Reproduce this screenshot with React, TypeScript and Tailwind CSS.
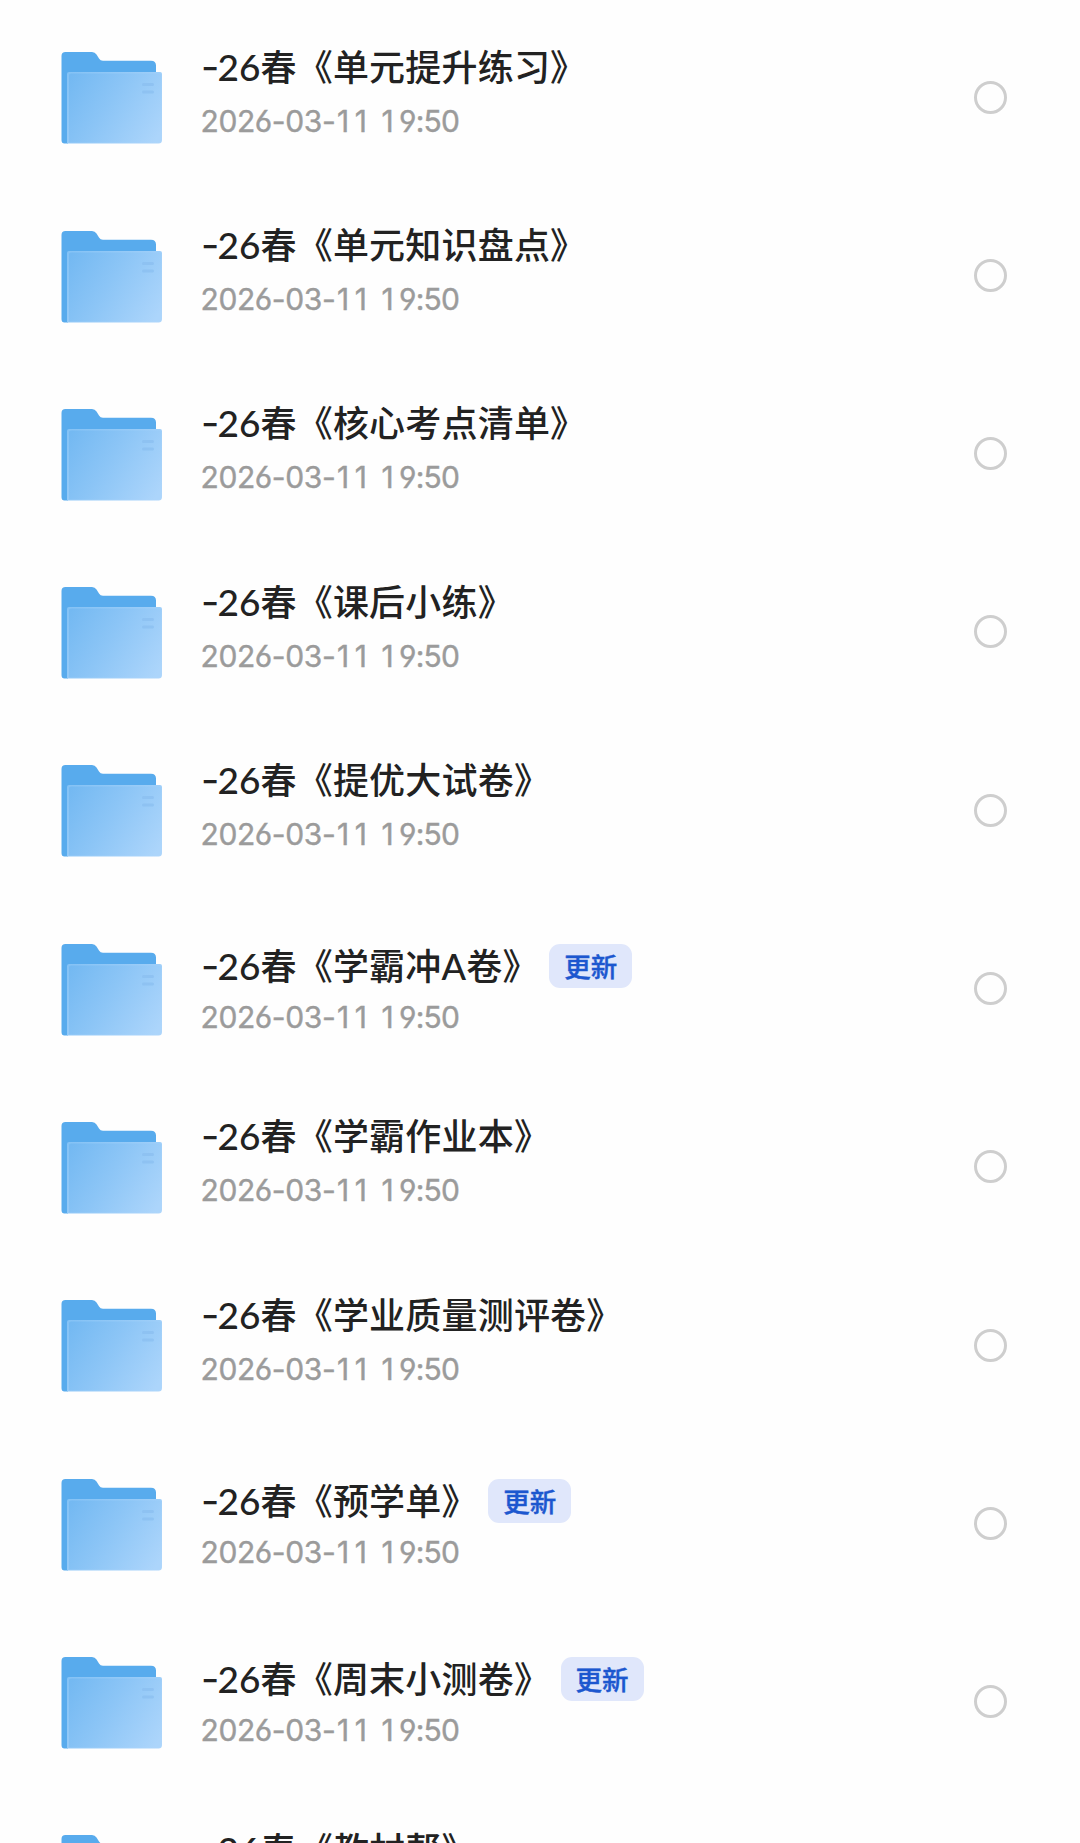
import React from "react";

type Entry = { title: string; updated?: boolean };

const entries: Entry[] = [
  { title: "春《单元提升练习》" },
  { title: "春《单元知识盘点》" },
  { title: "春《核心考点清单》" },
  { title: "春《课后小练》" },
  { title: "春《提优大试卷》" },
  { title: "春《学霸冲A卷》", updated: true },
  { title: "春《学霸作业本》" },
  { title: "春《学业质量测评卷》" },
  { title: "春《预学单》", updated: true },
  { title: "春《周末小测卷》", updated: true },
  { title: "春《教材帮》" },
];

function FolderIcon() {
  return (
    <svg className="mt-[43.3px] h-[94px] w-[102px] shrink-0" viewBox="0 0 102 94" fill="none">
      <defs>
        <linearGradient id="front" x1="8" y1="28" x2="98" y2="84" gradientUnits="userSpaceOnUse">
          <stop stopColor="#74b9f2" />
          <stop offset="0.45" stopColor="#8cc5f6" />
          <stop offset="1" stopColor="#acd5fb" />
        </linearGradient>
        <linearGradient id="edge" x1="6" y1="22" x2="100" y2="92" gradientUnits="userSpaceOnUse">
          <stop stopColor="#84c2f5" />
          <stop offset="1" stopColor="#afd6fb" />
        </linearGradient>
      </defs>
      <path d="M0.5 5Q0.5 1 4.500 1H31Q34 1 35.500 3.500L38 7.500Q39.300 9.700 42 9.700H90Q95 9.700 95 14.500V80H7V92.500H3.500Q0.500 92.500 0.500 89Z" fill="#58abed" />
      <path d="M6 23Q6 21 8 21H99Q101 21 101 23V89Q101 92.500 97.500 92.500H6Z" fill="url(#edge)" />
      <path d="M8 24Q8 22.500 10 22.500H98Q100 22.500 100 24V89Q100 91.500 97 91.500H8Z" fill="url(#front)" />
      <path d="M82.500 33.500H91.500M82.500 41H91.500" stroke="#8bbff0" strokeOpacity="0.75" strokeWidth="3" strokeLinecap="round" />
    </svg>
  );
}

function Timestamp() {
  return (
    <div className="flex h-[36px] font-[Inter] text-[30px] leading-[36px] whitespace-pre text-[#9b9b9b] [-webkit-text-stroke:0.4px_#9b9b9b] [font-feature-settings:'cv03','cv04']">
      <span className="w-[136.5px] tracking-[-0.4px]">2026-03-</span>
      <span className="w-[44.5px] tracking-[5.5px]">11 </span>
      <span className="w-[17.5px]">1</span>
      <span className="tracking-[-0.8px]">9:50</span>
    </div>
  );
}

function Row({ title, updated }: Entry) {
  return (
    <li className="flex h-[178.3px] shrink-0 items-start pr-[73px] pl-[60.5px]">
      <FolderIcon />
      <div className={updated ? "ml-[38px] flex-1 pt-[44.2px]" : "ml-[38px] flex-1 pt-[36.7px]"}>
        <div className="flex h-[44px] items-center text-[36px] leading-[44px] font-medium whitespace-nowrap text-[#222222]">
          <span className="flex w-[60px]">
            <span className="inline-block w-[18px] origin-left scale-x-110 font-[Inter]">-</span>
            <span className="font-[Lato] text-[37px]">26</span>
          </span>
          <span className="font-[Lato,'Noto_Sans_CJK_SC',sans-serif] text-[36px] tracking-[0.2px]">{title}</span>
          {updated && (
            <span className="ml-[10.5px] flex h-[44px] w-[83px] items-center justify-center rounded-[11px] bg-[#e0e7fb] font-['Noto_Sans_CJK_SC',sans-serif] text-[26.5px] text-[#1c57cf] [-webkit-text-stroke:0.4px_#1c57cf]">
              更新
            </span>
          )}
        </div>
        <div className={updated ? "mt-[11px]" : "mt-[14px]"}>
          <Timestamp />
        </div>
      </div>
      <span className="mt-[72.5px] size-[33px] shrink-0 rounded-full border-[3px] border-[#cecece]" />
    </li>
  );
}

export default function App() {
  return (
    <main className="h-[1843px] w-[1080px] overflow-hidden bg-[#fefefe] pt-2">
      <ul className="flex flex-col">
        {entries.map((e) => (
          <Row key={e.title} {...e} />
        ))}
      </ul>
    </main>
  );
}
